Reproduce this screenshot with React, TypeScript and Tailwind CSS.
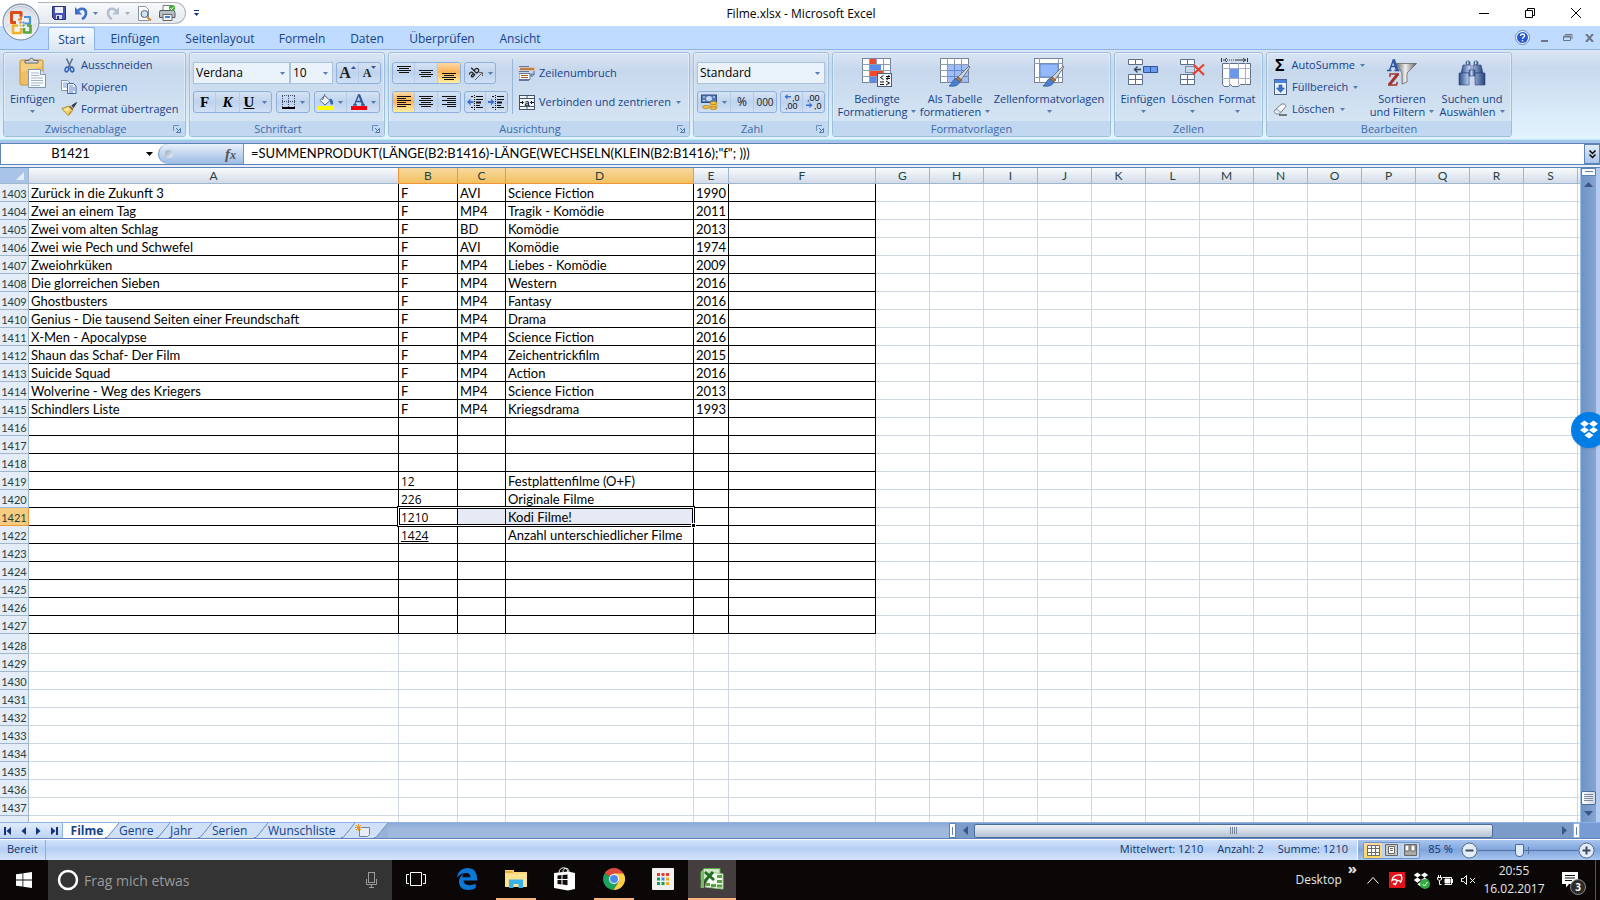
import React from "react";

type Kids = { children?: React.ReactNode };

/* ---------- spreadsheet data ---------- */

type Film = [title: string, medium: string, format: string, genre: string, year: string];

const films: Film[] = [
  ["Zurück in die Zukunft 3", "F", "AVI", "Science Fiction", "1990"],
  ["Zwei an einem Tag", "F", "MP4", "Tragik - Komödie", "2011"],
  ["Zwei vom alten Schlag", "F", "BD", "Komödie", "2013"],
  ["Zwei wie Pech und Schwefel", "F", "AVI", "Komödie", "1974"],
  ["Zweiohrküken", "F", "MP4", "Liebes - Komödie", "2009"],
  ["Die glorreichen Sieben", "F", "MP4", "Western", "2016"],
  ["Ghostbusters", "F", "MP4", "Fantasy", "2016"],
  ["Genius - Die tausend Seiten einer Freundschaft", "F", "MP4", "Drama", "2016"],
  ["X-Men - Apocalypse", "F", "MP4", "Science Fiction", "2016"],
  ["Shaun das Schaf- Der Film", "F", "MP4", "Zeichentrickfilm", "2015"],
  ["Suicide Squad", "F", "MP4", "Action", "2016"],
  ["Wolverine - Weg des Kriegers", "F", "MP4", "Science Fiction", "2013"],
  ["Schindlers Liste", "F", "MP4", "Kriegsdrama", "1993"],
];

const totals: Record<number, [string, string]> = {
  1419: ["12", "Festplattenfilme (O+F)"],
  1420: ["226", "Originale Filme"],
  1421: ["1210", "Kodi Filme!"],
  1422: ["1424", "Anzahl unterschiedlicher Filme"],
};

const FIRST_ROW = 1403;
const LAST_FRAMED_ROW = 1427;
const LAST_NUMBERED_ROW = 1437;
const SELECTED_ROW = 1421;
const rowNumbers = Array.from({ length: 36 }, (_, i) => FIRST_ROW + i);
const columns = "ABCDEFGHIJKLMNOPQRS".split("");
const columnWidths = [
  "w-[370px]", "w-[59px]", "w-[48px]", "w-[188px]", "w-[35px]", "w-[147px]",
];

function cellText(row: number, col: number): string {
  const film = films[row - FIRST_ROW];
  if (film) return film[col] ?? "";
  const total = totals[row];
  if (total && col === 1) return total[0];
  if (total && col === 3) return total[1];
  return "";
}

/* ---------- small shared parts ---------- */

function Caret({ className = "text-[#567db1]" }: { className?: string }) {
  return (
    <svg width="5" height="3" viewBox="0 0 5 3" className={`shrink-0 ${className}`} aria-hidden>
      <path d="M0 0h5L2.500 3z" fill="currentColor" />
    </svg>
  );
}

function Group({ title, width, launcher, children }: Kids & { title: string; width: string; launcher?: boolean }) {
  return (
    <section
      className={`flex shrink-0 flex-col overflow-hidden rounded-[3px] border border-[#9ebfdb] bg-linear-to-b from-[#dae5f3] from-0% via-[#c7d8ed] via-20% to-[#d8e8f5] ${width}`}
    >
      <div className="flex flex-1 border border-b-0 border-white/40">{children}</div>
      <div className="flex h-[15px] items-center bg-[#c1d8f0] px-1 text-[11px] leading-[15px] text-[#3e6aaa]">
        <span className="flex-1 text-center">{title}</span>
        {launcher && (
          <button aria-label={`${title} Optionen`} className="ml-[10px]">
            <svg width="8" height="8" viewBox="0 0 8 8" fill="none" stroke="#6a8fc0">
              <path d="M.5 6V.5H6" />
              <path d="M3.500 7.500h4v-4zM3 3l3 3" stroke="#4f78b0" />
            </svg>
          </button>
        )}
      </div>
    </section>
  );
}

function Strip({ children }: Kids) {
  return (
    <div className="flex h-[22px] shrink-0 divide-x divide-[#b5cbe8] overflow-hidden rounded-[3px] border border-[#8fb0dc] bg-linear-to-b from-[#d5e2f3] from-0% via-[#bfd3ee] via-50% to-[#d0e0f5]">
      {children}
    </div>
  );
}

function Tool({ label, width, on, children }: Kids & { label: string; width: string; on?: boolean }) {
  return (
    <button
      aria-label={label}
      className={`flex items-center justify-center gap-1 ${width} ${
        on ? "bg-linear-to-b from-[#fbd9a5] from-0% via-[#fdb355] via-45% to-[#fff0a0]" : ""
      }`}
    >
      {children}
    </button>
  );
}

function SmallButton({ icon, label, caret }: { icon: React.ReactNode; label: string; caret?: boolean }) {
  return (
    <button className="flex h-[22px] items-center whitespace-nowrap text-[#15428b]">
      <span className="mr-1 flex w-4 justify-center">{icon}</span>
      {label}
      {caret && <span className="ml-[5px]"><Caret /></span>}
    </button>
  );
}

function BigButton({
  icon, lines, width, inline,
}: { icon: React.ReactNode; lines: string[]; width: string; inline?: boolean }) {
  return (
    <button className={`flex shrink-0 flex-col items-center whitespace-nowrap pt-1 leading-[13px] text-[#15428b] ${width}`}>
      <span className="mb-1 flex h-[30px] items-center">{icon}</span>
      <span>{lines[0]}</span>
      {inline ? (
        <span className="flex items-center gap-1">{lines[1]}<Caret /></span>
      ) : (
        <span className="flex h-[13px] items-center"><Caret /></span>
      )}
    </button>
  );
}

/* ---------- icons ---------- */

function AlignIcon({ rows, shift = 0 }: { rows: [number, number][]; shift?: number }) {
  return (
    <svg width="14" height="14" viewBox="0 0 14 14" fill="#111" aria-hidden>
      {rows.map(([x, w], i) => (
        <rect key={i} x={x} y={shift + i * 2} width={w} height="1" />
      ))}
    </svg>
  );
}

const shortRows: [number, number][] = [[0, 14], [2, 10], [0, 14], [2, 10]];
const leftRows: [number, number][] = [[0, 14], [0, 9], [0, 14], [0, 9], [0, 14], [0, 9]];
const midRows: [number, number][] = [[0, 14], [2, 10], [0, 14], [2, 10], [0, 14], [2, 10]];
const rightRows: [number, number][] = [[0, 14], [5, 9], [0, 14], [5, 9], [0, 14], [5, 9]];

const IndentIcon = ({ inward }: { inward?: boolean }) => (
  <svg width="17" height="15" viewBox="0 0 17 15" className="shrink-0" aria-hidden>
    <path d="M7.500 0v15" stroke="#111" strokeDasharray="1 1" />
    <path d="M4 1.500h2M9 1.500h7M9 4.500h7M9 10.500h4M4 12.500h2M9 12.500h7" stroke="#111" />
    <path d="M9 7.500h5" stroke="#111" strokeWidth="2" />
    <path d={inward ? "M0 6h3V3.500L6.500 7 3 10.500V8H0z" : "M6.500 6h-3V3.500L0 7l3.500 3.500V8h3z"} fill="#3c6fd0" />
  </svg>
);

const PasteIcon = () => (
  <svg width="28" height="32" viewBox="0 0 28 32" aria-hidden>
    <rect x="1" y="3" width="23" height="25" rx="1.500" fill="#efbf62" stroke="#c8923a" />
    <path d="M2 4h21v5L2 15z" fill="#f8d58e" opacity=".7" />
    <path d="M6 6V3.500h4C10 .5 15 .5 15 3.500h4V6z" fill="#dfe3e8" stroke="#5d6570" />
    <rect x="11" y="2" width="3" height="2" fill="#fff" stroke="#777" strokeWidth=".5" />
    <path d="M9.500 12.500h12l5 5v13h-17z" fill="#fbfcfe" stroke="#8095b0" />
    <path d="M21.500 12.500v5h5" fill="#dbe4f0" stroke="#8095b0" />
    <path d="M12 16h8M12 18.500h8M12 21h12M12 23.500h12M12 26h12M12 28.500h9" stroke="#a4b4cb" />
  </svg>
);

const CutIcon = () => (
  <svg width="11" height="15" viewBox="0 0 11 15" fill="none" aria-hidden>
    <path d="M2.500.5 6.500 9M8.500.5 4.500 9" stroke="#5c6b80" strokeWidth="1.500" />
    <ellipse cx="2.800" cy="11.500" rx="1.700" ry="2.400" stroke="#2f5fb4" strokeWidth="1.500" transform="rotate(20 2.800 11.500)" />
    <ellipse cx="8" cy="11.500" rx="1.700" ry="2.400" stroke="#2f5fb4" strokeWidth="1.500" transform="rotate(-20 8 11.500)" />
  </svg>
);

const CopyIcon = () => (
  <svg width="16" height="14" viewBox="0 0 16 14" aria-hidden>
    <path d="M.5.5h6l2.500 2.500v7.500H.5z" fill="#fff" stroke="#7d93b8" />
    <path d="M2 3h4M2 5h5M2 7h5" stroke="#7b9cd8" />
    <path d="M6.500 3.500h6l2.500 2.500v7.500H6.500z" fill="#f3f7ff" stroke="#3c66ad" />
    <path d="M8 6h4M8 8h6M8 10h6M8 12h4" stroke="#6289cf" />
  </svg>
);

const PainterIcon = () => (
  <svg width="16" height="14" viewBox="0 0 16 14" aria-hidden>
    <path d="M15.500.5 11 3.500l1.500 2z" fill="#45474d" stroke="#33353a" />
    <path d="M9 3.500 12.500 7l-1.200 1L8 4.500z" fill="#7a5b34" />
    <path d="M1 6.500 7.500 4l4 4.500-4 5C5 11.500 3 9.500 1 6.500z" fill="#f3cf66" stroke="#a67a28" strokeWidth=".8" />
    <path d="M3 7.500 7 6l2 1-3 2z" fill="#fdf0bb" />
    <path d="m7.500 13.500 1-3 3-2z" fill="#b97a22" />
  </svg>
);

const BorderIcon = () => (
  <svg width="13" height="14" viewBox="0 0 13 14" stroke="#3f5068" fill="none" aria-hidden>
    <path d="M0 .5h13M0 6.500h13M.5 1v12M6.500 1v12M12.500 1v12" strokeDasharray="1 1" />
    <path d="M0 13h13" stroke="#000" strokeWidth="2" />
  </svg>
);

const FillIcon = () => (
  <svg width="16" height="16" viewBox="0 0 16 16" aria-hidden>
    <path d="M6.500 1.500 12 6.500 7 11 2 6.500z" fill="#eef3fa" stroke="#516b93" />
    <path d="M4.500 6 7 0" stroke="#516b93" fill="none" />
    <path d="M12 5c2 0 3 2 2.500 5-1 1-1.800 0-1.800-1.500z" fill="#3768b8" stroke="#3768b8" />
    <rect y="12" width="16" height="4" fill="#ff0" />
  </svg>
);

const FontColorIcon = () => (
  <svg width="16" height="16" viewBox="0 0 16 16" aria-hidden>
    <path d="m3.500 11 4-10h1l4 10M5 7.500h6M2 11h4M10 11h4" stroke="#34579b" strokeWidth="1.400" fill="none" />
    <path d="m8 1 4 10" stroke="#34579b" strokeWidth="2" />
    <rect y="12" width="16" height="4" fill="#f00010" />
  </svg>
);

const OrientIcon = () => (
  <svg width="16" height="16" viewBox="0 0 16 16" fill="none" stroke="#222" strokeWidth="1.300" aria-hidden>
    <g transform="rotate(-45 6 7)">
      <path d="M1 5.500c2-1.500 3.500-.5 3.500 1V10M4.500 7.500c-5-.5-4.500 3.500 0 1.500" />
      <path d="M7 2v8M7 7c1-2 4-1.500 4 .8S8 10.500 7 9" />
    </g>
    <path d="m7 15 7-7M14.500 11V7.500H11" stroke="#666" strokeWidth="1" />
  </svg>
);

const WrapIcon = () => (
  <svg width="16" height="15" viewBox="0 0 16 15" aria-hidden>
    <path d="M0 .5h10M0 5.500h10M0 14.500h10" stroke="#60779c" />
    <path d="M1 3h15" stroke="#e9b27a" strokeWidth="3" />
    <path d="M1 3h14" stroke="#8b4a1a" />
    <path d="M0 7.500h11v6H0z" fill="#fff" stroke="#60779c" />
    <path d="M2 9.500h7M2 11.500h7" stroke="#a45d22" />
    <path d="M15 5v4h-3m1.500-2-2 2 2 2" stroke="#44659b" fill="none" />
  </svg>
);

const MergeIcon = () => (
  <svg width="16" height="15" viewBox="0 0 16 15" aria-hidden>
    <rect x=".5" y=".5" width="15" height="14" fill="#f4f8fe" stroke="#42536e" />
    <path d="M0 3.500h16M0 11.500h16M8 0v3.500M8 11.500V15" stroke="#42536e" />
    <path d="M1 7.500h3M12 7.500h3M3 6l1.500 1.500L3 9M13 6l-1.500 1.500L13 9" stroke="#111" fill="none" />
    <text x="5.500" y="10.500" fontSize="9" fontWeight="700" fontFamily="Liberation Sans, sans-serif" fill="#111">a</text>
  </svg>
);

const MoneyIcon = () => (
  <svg width="17" height="16" viewBox="0 0 17 16" aria-hidden>
    <rect x=".5" y="1" width="15" height="7.500" fill="#5378b6" stroke="#2e4d86" />
    <ellipse cx="8" cy="4.500" rx="3" ry="2.500" fill="#c6d8f4" />
    <path d="M2 3h2M12 3h2M2 6.500h2" stroke="#dfe9fa" />
    <g fill="#f5c542" stroke="#a8761a" strokeWidth=".7">
      <ellipse cx="12.500" cy="14" rx="3.500" ry="1.500" />
      <ellipse cx="12.500" cy="11.500" rx="3.500" ry="1.500" />
      <ellipse cx="12.500" cy="9" rx="3.500" ry="1.500" />
      <ellipse cx="5" cy="13" rx="3.500" ry="1.500" />
    </g>
  </svg>
);

const DecimalIcon = ({ more }: { more?: boolean }) => (
  <svg width="16" height="16" viewBox="0 0 16 16" fontFamily="Liberation Sans, sans-serif" fontSize="9" fill="#111" stroke="none" className="shrink-0" aria-hidden>
    <text x={more ? 8 : 1} y="7">{more ? ",0" : ",00"}</text>
    <text x={more ? 1 : 8} y="15">{more ? ",00" : ",0"}</text>
    {more ? (
      <path d="M3.500 0v2H7v1.500H3.500v2L.5 2.800z" fill="#3c6fd0" />
    ) : (
      <path d="M3.500 8.500v2H0V12h3.500v2l3-2.700z" fill="#3c6fd0" />
    )}
  </svg>
);

const Brush = () => (
  <g>
    <path d="M29 8 18 19l3 3L30 9z" fill="#cfd3d8" stroke="#5f6670" strokeWidth=".8" />
    <path d="m18 19-2 2 3 3.500 3-2.500z" fill="#b37a3c" stroke="#75491c" strokeWidth=".7" />
    <path d="M16 20.500c-4 1-3 5-7 7.500 5 1 10-.5 10.500-4z" fill="#4d80cc" stroke="#2d5798" strokeWidth=".7" />
  </g>
);

const SheetGrid = () => (
  <g>
    <rect x=".5" y=".5" width="28" height="24" fill="#fff" stroke="#74839b" />
    <path d="M0 6.500h29M0 12.500h29M0 18.500h29M7.500 0v25M14.500 0v25M21.500 0v25" stroke="#8e9cb2" />
  </g>
);

const CondIcon = () => (
  <svg width="31" height="30" viewBox="0 0 31 30" aria-hidden>
    <SheetGrid />
    <path d="M8 1h6v5H8zM8 13h13v5H8z" fill="#f4492c" />
    <path d="M8 7h11v5H8zM8 19h6v5H8z" fill="#5a8cec" />
    <rect x="15.500" y="15.500" width="14" height="13" fill="#f3f6fb" stroke="#4b5e7d" />
    <path d="m21.500 17.500-3 2 3 2M18 24h4M18 26.500h4M24 18.500h4M24 20.500h4M27 17l-2 5M24 23l3.500 2-3.500 2" stroke="#111" fill="none" />
  </svg>
);

const TableIcon = () => (
  <svg width="31" height="30" viewBox="0 0 31 30" aria-hidden>
    <SheetGrid />
    <path d="M8 7h20v17H8z" fill="#8fb2f6" opacity=".85" />
    <path d="M8 12.500h20M8 18.500h20M14.500 7v17M21.500 7v17" stroke="#6689cc" />
    <Brush />
  </svg>
);

const StylesIcon = () => (
  <svg width="31" height="30" viewBox="0 0 31 30" aria-hidden>
    <rect x=".5" y=".5" width="28" height="24" fill="#fff" stroke="#74839b" />
    <path d="M0 5.500h29M0 19.500h29M5.500 0v25M24.500 0v25" stroke="#8e9cb2" />
    <rect x="6" y="6" width="18" height="13" fill="#94b8fa" stroke="#5f86cf" />
    <Brush />
  </svg>
);

const CellPair = ({ y }: { y: number }) => (
  <g fill="#fff" stroke="#5c6e8c">
    <path d={`M.5 ${y + 0.5}h14v5H.5zM7.500 ${y}v6`} />
  </g>
);

const InsertCellsIcon = () => (
  <svg width="30" height="28" viewBox="0 0 30 28" aria-hidden>
    <CellPair y={0} /><CellPair y={15} /><CellPair y={20} />
    <path d="M13 10.500H6.500m3-3-3 3 3 3" stroke="#33465f" strokeWidth="1.300" fill="none" />
    <path d="M15.500 7.500h14v6h-14zM22.500 7v7" fill="#6a9bf2" stroke="#2f5499" />
  </svg>
);

const DeleteCellsIcon = () => (
  <svg width="26" height="28" viewBox="0 0 26 28" aria-hidden>
    <CellPair y={0} /><CellPair y={15} /><CellPair y={20} />
    <path d="M5.500 7.500h9v6h-9z" fill="none" stroke="#33465f" strokeDasharray="1 1" />
    <path d="m14 6 10 10M24 5.500 13 15.500" stroke="#ef3b24" strokeWidth="2" />
  </svg>
);

const FormatCellsIcon = () => (
  <svg width="32" height="31" viewBox="0 0 32 31" aria-hidden>
    <path d="M.5 0v4M26.500 0v4" stroke="#333" />
    <path d="M2 2h11" stroke="#333" strokeDasharray="1 1" />
    <path d="M14 2h11M6 0 3.500 2 6 4M22 0l2.500 2L22 4" stroke="#333" fill="none" />
    <path d="M1.500 5.500h28v21h-10l-2 2h-6l-2-2-2 2h-4l-2-2z" fill="#fff" stroke="#5f6f88" />
    <path d="M1 10.500h29M1 20.500h29M8.500 5v22M17.500 5v22M24.500 5v22" stroke="#a3adbd" />
    <rect x="9" y="11" width="9" height="9" fill="#6b96ea" />
  </svg>
);

const FillDownIcon = () => (
  <svg width="13" height="16" viewBox="0 0 13 16" aria-hidden>
    <rect x=".5" y=".5" width="12" height="15" fill="#e8f0fb" stroke="#46658f" />
    <path d="M1 1h11v3H1z" fill="#4a83dd" />
    <path d="M5 6h3v3h2.500l-4 4.500L2.500 9H5z" fill="#3b6fd4" stroke="#2350a0" strokeWidth=".6" />
  </svg>
);

const EraserIcon = () => (
  <svg width="15" height="13" viewBox="0 0 15 13" aria-hidden>
    <path d="M8 1.500c1-1 4-.5 4.500.5s0 2-.5 2.500l-5 6c-1 1-4 .5-5-.5-1-1-1-2 0-3z" fill="#fafbfd" stroke="#6f7c90" />
    <path d="m1.500 7 3-.5 3 2L7 10.500" fill="#ccd5e2" stroke="#8793a5" strokeWidth=".6" />
    <path d="M6 12h8" stroke="#111" />
  </svg>
);

const SortIcon = () => (
  <svg width="30" height="30" viewBox="0 0 30 30" fill="none" aria-hidden>
    <defs>
      <linearGradient id="funnel"><stop stopColor="#6e6e6e" /><stop offset=".45" stopColor="#eee" /><stop offset="1" stopColor="#5d5d5d" /></linearGradient>
    </defs>
    <path d="M2.500 12.500 6.500 1.500M3.500 8.500h5M0 12.500h4.500M7.500 12.500h5" stroke="#2f57a6" strokeWidth="1.400" />
    <path d="m6.500 1.500 4 11" stroke="#2f57a6" strokeWidth="2.800" />
    <path d="M9.500 5.500h20L20 15v9l-5 2V15z" fill="url(#funnel)" stroke="#5a5a5a" strokeWidth=".7" />
    <path d="M3 19v-3h9M1 27h8.500l.8-3" stroke="#a5322c" strokeWidth="1.500" />
    <path d="M11 16 2 27" stroke="#a5322c" strokeWidth="2.800" />
  </svg>
);

const BinocularsIcon = () => (
  <svg width="28" height="26" viewBox="0 0 28 26" aria-hidden>
    <defs>
      <linearGradient id="barrel"><stop stopColor="#2b4a86" /><stop offset=".4" stopColor="#c3d6f5" /><stop offset="1" stopColor="#24427a" /></linearGradient>
    </defs>
    <g fill="url(#barrel)" stroke="#2c4478" strokeWidth=".6">
      <rect x="8" y="1" width="4" height="4" rx="1.500" />
      <rect x="16" y="1" width="4" height="4" rx="1.500" />
      <path d="M5 5h8v8H3zM15 5h8l2 8H15z" />
      <path d="M1 13h10v12H1zM17 13h10v12H17z" />
      <rect x="11" y="10" width="6" height="6" />
    </g>
  </svg>
);

const OfficeLogo = () => (
  <svg width="38" height="38" viewBox="0 0 38 38" aria-hidden>
    <defs>
      <radialGradient id="orb" cx=".5" cy=".85" r=".85"><stop stopColor="#fff" /><stop offset=".5" stopColor="#dfe4ec" /><stop offset="1" stopColor="#b4bfcf" /></radialGradient>
    </defs>
    <circle cx="19" cy="19" r="18" fill="url(#orb)" stroke="#7484a0" />
    <circle cx="19" cy="19" r="16.500" fill="none" stroke="#fff" opacity=".7" />
    <path d="M3 20a16 16 0 0 1 32 0c-9 3-23 3-32 0z" fill="#fff" opacity=".4" />
    <g fill="none" strokeLinejoin="round">
      <path d="M14 19.500H9.500v-10H19V14" stroke="#dc4a16" strokeWidth="3" />
      <path d="M19 13v3.500h-3" stroke="#ee7a2c" strokeWidth="2" />
      <path d="M22 14h6v6.500h-5.500" stroke="#4a93d8" strokeWidth="2.200" />
      <path d="M16 22.500h-5V30h8v-5" stroke="#f5b226" strokeWidth="2.600" />
      <path d="M22 25v4.500h6.500V22.500H25" stroke="#58a63c" strokeWidth="2.600" />
    </g>
    <path d="M17.500 18.500h2v2h-2z" fill="#e25a1c" />
    <path d="M20.500 18.500h2v2h-2z" fill="#4a93d8" />
    <path d="M17.500 21.500h2v2h-2z" fill="#f5b226" />
    <path d="M20.500 21.500h2v2h-2z" fill="#58a63c" />
  </svg>
);

/* ---------- title bar and tabs ---------- */

function TitleBar() {
  return (
    <header className="relative flex h-[26px] shrink-0 items-center bg-white">
      <div className="absolute left-[2px] top-[3px] z-10"><button aria-label="Office-Schaltfläche"><OfficeLogo /></button></div>
      <div className="ml-[38px] flex h-[22px] w-[148px] items-center rounded-r-full border border-l-0 border-[#b1b5ba] bg-linear-to-b from-[#f7f9fb] to-[#e4e9f0] pl-[14px]">
        <button aria-label="Speichern" className="w-[22px]">
          <svg width="14" height="14" viewBox="0 0 14 14"><path d="M.5.5h13v13h-11l-2-2z" fill="#4b53b5" stroke="#282d7c" /><path d="M3 1h8v6H3z" fill="#eef1fb" /><path d="M4 9h6v4H4z" fill="#d8dcef" /><path d="M5 10h2v3H5z" fill="#282d7c" /></svg>
        </button>
        <button aria-label="Rückgängig" className="flex w-[32px] items-center gap-[5px]">
          <svg width="14" height="13" viewBox="0 0 14 13"><path d="M3 5c3-5 9-4 9 1 0 3-2 5-4 6" fill="none" stroke="#3c70c8" strokeWidth="2.600" /><path d="M1 0v7.500h7z" fill="#3c70c8" /></svg>
          <Caret />
        </button>
        <button aria-label="Wiederholen" className="flex w-[31px] items-center gap-[5px]">
          <svg width="14" height="13" viewBox="0 0 14 13"><path d="M11 5C8 0 2 1 2 6c0 3 2 5 4 6" fill="none" stroke="#b4bfcf" strokeWidth="2.600" /><path d="M13 0v7.500H6z" fill="#b4bfcf" /></svg>
          <Caret className="text-[#a8afb8]" />
        </button>
        <button aria-label="Seitenansicht" className="w-[22px]">
          <svg width="15" height="15" viewBox="0 0 15 15"><path d="M1.500.5h7l3 3v11h-10z" fill="#fff" stroke="#8a93a0" /><circle cx="7.500" cy="8" r="3.500" fill="#cfe2f8" stroke="#4e6280" /><path d="m10 11 4 3.500" stroke="#d28b2d" strokeWidth="2" /></svg>
        </button>
        <button aria-label="Drucken">
          <svg width="17" height="16" viewBox="0 0 17 16"><path d="M4 .5h8V6H4z" fill="#fff" stroke="#777" /><path d="M1 5.500h14l1 2v5H.5v-5z" fill="#b9bec5" stroke="#555b63" /><path d="M4 9.500h9v6H4z" fill="#f5f7fa" stroke="#666" /><path d="M6 12h5" stroke="#4b7fd0" strokeWidth="2" /><circle cx="13" cy="3" r="3" fill="#3aa835" /><path d="m11.500 3 1 1.500 2-2.500" stroke="#fff" fill="none" /></svg>
        </button>
      </div>
      <button aria-label="Symbolleiste anpassen" className="ml-2 text-[#15327b]">
        <svg width="5" height="6" viewBox="0 0 5 6"><path d="M0 .5h5" stroke="currentColor" /><path d="M0 3h5L2.500 6z" fill="currentColor" /></svg>
      </button>
      <h1 className="flex-1 pr-[58px] pt-[2px] text-center text-[12px] text-black">Filme.xlsx - Microsoft Excel</h1>
      <div className="flex h-full pr-px">
        <button aria-label="Minimieren" className="flex w-[46px] items-center justify-center"><svg width="10" height="10"><path d="M0 5.500h10" stroke="#000" /></svg></button>
        <button aria-label="Verkleinern" className="flex w-[46px] items-center justify-center"><svg width="10" height="10" fill="none" stroke="#000"><path d="M.5 2.500h7v7h-7zM2.500 2V.5h7v7H8" /></svg></button>
        <button aria-label="Schließen" className="flex w-[46px] items-center justify-center"><svg width="10" height="10" stroke="#000"><path d="m0 0 10 10M10 0 0 10" /></svg></button>
      </div>
    </header>
  );
}

const ribbonTabs: [string, string][] = [
  ["Einfügen", "w-[76px]"], ["Seitenlayout", "w-[94px]"], ["Formeln", "w-[70px]"],
  ["Daten", "w-[60px]"], ["Überprüfen", "w-[90px]"], ["Ansicht", "w-[66px]"],
];

function RibbonTabs() {
  return (
    <nav className="flex h-6 shrink-0 items-end border-b border-[#8db2e3] bg-[#bfdbff] pl-12 text-[12px] text-[#15428b]">
      <button className="-mb-px h-[23px] w-[47px] rounded-t-[3px] border border-b-0 border-[#8db2e3] bg-linear-to-b from-[#f6faff] to-[#dbe6f4] pt-px">Start</button>
      <span className="w-[2px]" />
      {ribbonTabs.map(([name, width]) => (
        <button key={name} className={`h-[23px] pt-[2px] ${width}`}>{name}</button>
      ))}
      <span className="flex-1" />
      <div className="flex h-[23px] items-center pr-[3px]">
        <button aria-label="Hilfe" className="mr-[11px]">
          <svg width="15" height="15" viewBox="0 0 15 15"><circle cx="7.500" cy="7.500" r="7" fill="#fff" stroke="#5f83bd" /><circle cx="7.500" cy="7.500" r="5.500" fill="#2559cf" /><path d="M5.500 6c0-3 4.500-2.500 4 0-.3 1-2 1.200-2 3M7.500 10v1.500" stroke="#fff" strokeWidth="1.400" fill="none" /></svg>
        </button>
        <button aria-label="Mappe minimieren" className="w-[22px]"><svg width="8" height="10"><path d="M0 8h7" stroke="#6c7685" strokeWidth="2" /></svg></button>
        <button aria-label="Mappe verkleinern" className="w-[22px]"><svg width="10" height="8" fill="none" stroke="#6c7685"><path d="M.5 2.500h7v4h-7zM2 .5h7V5" /><path d="M.5 2.500h7" strokeWidth="2" /></svg></button>
        <button aria-label="Mappe schließen" className="w-3"><svg width="10" height="8"><path d="m1 0 7 8M8 0 1 8" stroke="#6c7685" strokeWidth="2" /></svg></button>
      </div>
    </nav>
  );
}

/* ---------- ribbon ---------- */

function Picker({ label, value, width }: { label: string; value: string; width: string }) {
  return (
    <div className={`relative flex h-[22px] items-center ${width}`}>
      <select aria-label={label} defaultValue={value} className="h-full w-full appearance-none border border-[#abc1de] bg-[#eaf2fb] pl-[2px] text-[12px] text-black">
        <option>{value}</option>
      </select>
      <span className="pointer-events-none absolute right-[5px]"><Caret /></span>
    </div>
  );
}

function Ribbon() {
  return (
    <div className="flex h-[90px] shrink-0 gap-[3px] border-b border-[#b5eef5] bg-linear-to-b from-[#dbe6f4] from-0% via-[#c8d9ee] via-20% to-[#e3f4ff] pb-[2px] pl-[3px] pt-[2px] text-[11px]">
      <Group title="Zwischenablage" width="w-[183px]" launcher>
        <BigButton icon={<PasteIcon />} lines={["Einfügen"]} width="w-[55px]" />
        <div className="flex flex-col pl-px">
          <SmallButton icon={<CutIcon />} label="Ausschneiden" />
          <SmallButton icon={<CopyIcon />} label="Kopieren" />
          <SmallButton icon={<PainterIcon />} label="Format übertragen" />
        </div>
      </Group>

      <Group title="Schriftart" width="w-[196px]" launcher>
        <div className="flex flex-col gap-[7px] pl-[2px] pt-2">
          <div className="flex">
            <Picker label="Schriftart" value="Verdana" width="w-[97px]" />
            <Picker label="Schriftgrad" value="10" width="w-[43px]" />
            <span className="w-[3px]" />
            <Strip>
              <Tool label="Schriftgrad vergrößern" width="w-[22px]">
                <span className="font-['Liberation_Serif',serif] text-[16px] font-bold leading-4 text-[#222]">A</span>
                <svg width="5" height="14" className="-ml-1"><path d="M0 3h5L2.500 0z" fill="#34579b" /></svg>
              </Tool>
              <Tool label="Schriftgrad verkleinern" width="w-[21px]">
                <span className="font-['Liberation_Serif',serif] text-[12px] font-bold leading-4 text-[#222]">A</span>
                <svg width="5" height="14" className="-ml-1"><path d="M0 0h5L2.500 3z" fill="#34579b" /></svg>
              </Tool>
            </Strip>
          </div>
          <div className="flex gap-[4px] font-['Liberation_Serif',serif] text-[15px] font-bold text-black">
            <Strip>
              <Tool label="Fett" width="w-[22px]">F</Tool>
              <Tool label="Kursiv" width="w-[24px]"><i>K</i></Tool>
              <Tool label="Unterstrichen" width="w-[31px]"><u>U</u><span className="ml-1"><Caret /></span></Tool>
            </Strip>
            <Strip><Tool label="Rahmen" width="w-[32px]"><BorderIcon /><span className="ml-px"><Caret /></span></Tool></Strip>
            <Strip>
              <Tool label="Füllfarbe" width="w-[32px]"><FillIcon /><Caret /></Tool>
              <Tool label="Schriftfarbe" width="w-[32px]"><FontColorIcon /><Caret /></Tool>
            </Strip>
          </div>
        </div>
      </Group>

      <Group title="Ausrichtung" width="w-[302px]" launcher>
        <div className="flex flex-col gap-[7px] pl-[2px] pt-2">
          <div className="flex gap-[3px]">
            <Strip>
              <Tool label="Oben ausrichten" width="w-[22px]"><AlignIcon rows={shortRows} /></Tool>
              <Tool label="Zentriert ausrichten" width="w-[23px]"><AlignIcon rows={shortRows} shift={4} /></Tool>
              <Tool label="Unten ausrichten" width="w-[22px]" on><AlignIcon rows={shortRows} shift={7} /></Tool>
            </Strip>
            <Strip><Tool label="Ausrichtung" width="w-[30px]"><OrientIcon /><Caret /></Tool></Strip>
          </div>
          <div className="flex gap-[3px]">
            <Strip>
              <Tool label="Linksbündig" width="w-[22px]" on><AlignIcon rows={leftRows} shift={1} /></Tool>
              <Tool label="Zentriert" width="w-[23px]"><AlignIcon rows={midRows} shift={1} /></Tool>
              <Tool label="Rechtsbündig" width="w-[22px]"><AlignIcon rows={rightRows} shift={1} /></Tool>
            </Strip>
            <Strip>
              <Tool label="Einzug verkleinern" width="w-[21px]"><IndentIcon /></Tool>
              <Tool label="Einzug vergrößern" width="w-[21px]"><IndentIcon inward /></Tool>
            </Strip>
          </div>
        </div>
        <div className="ml-1 mt-[5px] h-[55px] w-px bg-[#9ab5d8]" />
        <div className="flex flex-col gap-[7px] pl-[6px] pt-2">
          <SmallButton icon={<WrapIcon />} label="Zeilenumbruch" />
          <SmallButton icon={<MergeIcon />} label="Verbinden und zentrieren" caret />
        </div>
      </Group>

      <Group title="Zahl" width="w-[136px]" launcher>
        <div className="flex flex-col gap-[7px] pl-[2px] pt-2">
          <Picker label="Zahlenformat" value="Standard" width="w-[128px]" />
          <div className="flex gap-[3px] text-[12px] text-[#222]">
            <Strip>
              <Tool label="Buchhaltungsformat" width="w-[33px]"><MoneyIcon /><Caret /></Tool>
              <Tool label="Prozentformat" width="w-[23px]">%</Tool>
              <Tool label="Tausendertrennzeichen" width="w-[22px]"><span className="text-[10px]">000</span></Tool>
            </Strip>
            <Strip>
              <Tool label="Dezimalstelle hinzufügen" width="w-[22px]"><DecimalIcon more /></Tool>
              <Tool label="Dezimalstelle löschen" width="w-[21px]"><DecimalIcon /></Tool>
            </Strip>
          </div>
        </div>
      </Group>

      <Group title="Formatvorlagen" width="w-[279px]">
        <BigButton icon={<CondIcon />} lines={["Bedingte", "Formatierung"]} width="w-[86px]" inline />
        <BigButton icon={<TableIcon />} lines={["Als Tabelle", "formatieren"]} width="w-[70px]" inline />
        <BigButton icon={<StylesIcon />} lines={["Zellenformatvorlagen"]} width="w-[118px]" />
      </Group>

      <Group title="Zellen" width="w-[149px]">
        <BigButton icon={<InsertCellsIcon />} lines={["Einfügen"]} width="w-[54px]" />
        <BigButton icon={<DeleteCellsIcon />} lines={["Löschen"]} width="w-[45px]" />
        <BigButton icon={<FormatCellsIcon />} lines={["Format"]} width="w-[44px]" />
      </Group>

      <Group title="Bearbeiten" width="w-[246px]">
        <div className="flex w-[97px] flex-col pl-1">
          <SmallButton icon={<span className="text-[16px] font-bold leading-4 text-black">Σ</span>} label="AutoSumme" caret />
          <SmallButton icon={<FillDownIcon />} label="Füllbereich" caret />
          <SmallButton icon={<EraserIcon />} label="Löschen" caret />
        </div>
        <BigButton icon={<SortIcon />} lines={["Sortieren", "und Filtern"]} width="w-[74px]" inline />
        <BigButton icon={<BinocularsIcon />} lines={["Suchen und", "Auswählen"]} width="w-[66px]" inline />
      </Group>
    </div>
  );
}

/* ---------- formula bar ---------- */

function FormulaBar() {
  return (
    <div className="flex h-[28px] shrink-0 flex-col">
      <div className="h-[4px] border-b border-[#5d83b8] bg-[#a9c4e9]" />
      <div className="flex h-[20px] bg-white">
        <div className="flex w-[158px] items-center border-l border-[#5d83b8]">
          <input aria-label="Namenfeld" defaultValue="B1421" className="w-[145px] shrink-0 pr-[6px] text-center font-['Lato',sans-serif] text-[13px] text-black outline-none" />
          <svg width="7" height="4" aria-hidden><path d="M0 0h7L3.500 4z" /></svg>
        </div>
        <div className="flex w-[86px] items-center justify-between rounded-l-full border-x border-[#6f94c6] bg-linear-to-b from-[#e9f1fb] to-[#9bbae3] pl-[6px] pr-[7px]">
          <span className="h-2 w-2 rounded-full bg-linear-to-br from-[#9aa9bd] to-[#f0f4f9]" />
          <span className="font-['Liberation_Serif',serif] text-[15px] font-bold italic leading-4 text-[#555]">f<span className="text-[12px]">x</span></span>
        </div>
        <input
          aria-label="Bearbeitungsleiste"
          defaultValue={'=SUMMENPRODUKT(LÄNGE(B2:B1416)-LÄNGE(WECHSELN(KLEIN(B2:B1416);"f"; )))'}
          className="min-w-0 flex-1 pl-[7px] font-['Lato',sans-serif] text-[13px] text-black outline-none"
        />
        <button aria-label="Bearbeitungsleiste erweitern" className="flex w-4 items-center justify-center border border-[#5d83b8] bg-linear-to-b from-[#e3edfa] to-[#a9c4ea]">
          <svg width="7" height="9" viewBox="0 0 7 9" fill="none" stroke="#000" strokeWidth="1.500"><path d="m.5.500 3 3 3-3M.5 4.500l3 3 3-3" /></svg>
        </button>
      </div>
      <div className="h-[4px] border-y border-[#5d83b8] bg-[#e9f1fb]" />
    </div>
  );
}

/* ---------- sheet ---------- */

function SelectionFrame() {
  return (
    <div className="pointer-events-none absolute -left-[2px] -top-[2px] z-10 h-[21px] w-[298px] border border-black">
      <div className="h-full w-full border border-white">
        <div className="h-full w-full border border-black" />
      </div>
      <div className="absolute -bottom-[2px] -right-[2px] h-[5px] w-[5px] border border-white bg-black" />
    </div>
  );
}

function Sheet() {
  return (
    <div className="min-w-0 flex-1 overflow-hidden bg-white">
      <table className="w-full table-fixed border-separate border-spacing-0 font-['Lato',sans-serif] text-[13px] text-black">
        <colgroup>
          <col className="w-[29px]" />
          {columns.map((c, i) => <col key={c} className={columnWidths[i] ?? "w-[54px]"} />)}
          <col />
        </colgroup>
        <thead>
          <tr className="h-4 text-[#27413e]">
            <th className="h-4 border-b border-r border-[#9eb6ce] bg-[#a9c4e9] p-0">
              <svg width="8" height="8" className="ml-auto mr-1"><path d="M8 0v8H0z" fill="#e4ecf7" /></svg>
            </th>
            {columns.map((c, i) => (
              <th
                key={c}
                className={`h-4 overflow-hidden border-b border-r p-0 text-[12px] font-normal leading-[15px] ${
                  i >= 1 && i <= 3
                    ? "border-[#f29536] bg-linear-to-b from-[#f9d99f] to-[#f1c15f]"
                    : i === 0
                      ? "border-b-[#9eb6ce] border-r-[#f29536] bg-linear-to-b from-[#f9fcfd] to-[#d3dbe9]"
                      : "border-[#9eb6ce] bg-linear-to-b from-[#f9fcfd] to-[#d3dbe9]"
                }`}
              >
                {c}
              </th>
            ))}
            <th className="border-b border-[#9eb6ce] bg-linear-to-b from-[#f9fcfd] to-[#d3dbe9] p-0" />
          </tr>
        </thead>
        <tbody>
          {rowNumbers.map((n) => {
            const framed = n <= LAST_FRAMED_ROW;
            const tall = n === LAST_FRAMED_ROW + 1;
            const size = tall ? "h-5 pt-1 leading-[15px]" : "h-[18px] pt-[2px] leading-[15px]";
            return (
              <tr key={n}>
                <th
                  className={`border-b border-r px-0 pb-0 text-[11px] font-normal text-[#27413e] ${size} ${
                    n === SELECTED_ROW ? "border-[#f29536] bg-[#f8cc80]" : "border-[#9eb6ce] bg-[#e4ecf7]"
                  }`}
                >
                  {n <= LAST_NUMBERED_ROW ? n : ""}
                </th>
                {columns.map((c, i) => {
                  const black = framed && i <= 5;
                  const shaded = n === SELECTED_ROW && (i === 2 || i === 3);
                  const total = i === 1 && n > 1415;
                  return (
                    <td
                      key={c}
                      className={`relative whitespace-nowrap border-b border-r pb-0 pl-[2px] pr-0 ${size} ${
                        black ? "border-black" : "border-[#d0d7e5]"
                      } ${shaded ? "bg-[#e6eaf4]" : ""} ${total ? "font-['Open_Sans',sans-serif] text-[12px]" : ""} ${
                        total && n === 1422 ? "underline" : ""
                      }`}
                    >
                      {cellText(n, i)}
                      {n === SELECTED_ROW && i === 1 && <SelectionFrame />}
                    </td>
                  );
                })}
                <td className="border-b border-[#d0d7e5] p-0" />
              </tr>
            );
          })}
        </tbody>
      </table>
    </div>
  );
}

function VerticalScroll() {
  return (
    <div className="flex w-5 shrink-0 bg-[#b3cbf0]">
      <div className="flex w-4 flex-col items-center border-l border-[#9ec4f0] bg-linear-to-r from-[#6f93c4] to-[#86a5d1]">
        <button aria-label="Teilen" className="flex h-2 w-full items-center justify-center border border-[#5d83b8] bg-white"><span className="h-[3px] w-2 border-t border-[#5d83b8]" /></button>
        <button aria-label="Nach oben" className="flex h-4 items-center"><svg width="9" height="5"><path d="M0 5 4.500 0 9 5z" fill="#3c5585" /></svg></button>
        <span className="flex-1" />
        <button aria-label="Bildlauf" className="flex h-[14px] w-full items-center justify-center rounded-[2px] border border-[#4f6d9c] bg-linear-to-r from-white to-[#cfd8e6]">
          <svg width="9" height="8"><path d="M0 .5h9M0 2.500h9M0 4.500h9M0 6.500h9" stroke="#7d8ba3" /></svg>
        </button>
        <button aria-label="Nach unten" className="flex h-[17px] items-center"><svg width="9" height="5"><path d="M0 0h9L4.500 5z" fill="#3c5585" /></svg></button>
      </div>
    </div>
  );
}

/* ---------- sheet tabs and horizontal scroll ---------- */

function Slant({ left, right }: { left: string; right: string }) {
  return (
    <svg width="14" height="15" viewBox="0 0 14 15" className="shrink-0" aria-hidden>
      <path d="M0 0h14L2 15H0z" fill={left} />
      <path d="M14 0v15H2z" fill={right} />
      <path d="M14 0 2 14.500" stroke="#6a8ec4" fill="none" />
      <path d="M0 14.500h2" stroke="#6a8ec4" />
    </svg>
  );
}

const sheetTabs: [string, string][] = [
  ["Genre", "w-[37px]"], ["Jahr", "w-[28px]"], ["Serien", "w-[42px]"], ["Wunschliste", "w-[73px]"],
];

const navShapes = [
  ["Erstes Blatt", "M0 0h2v8H0zM7 0v8L2.500 4z"],
  ["Vorheriges Blatt", "M6 0v8L1.500 4z"],
  ["Nächstes Blatt", "M1 0v8l4.500-4z"],
  ["Letztes Blatt", "M0 0v8l4.500-4zM5 0h2v8H5z"],
];

function SheetTabs() {
  return (
    <div className="flex h-[17px] shrink-0 border-b border-t border-b-[#5d83b8] border-t-[#8db2e3] bg-linear-to-b from-[#8cabd6] to-[#9fb8de] to-40% text-[12px] leading-[15px] text-[#15428b]">
      <div className="flex w-[63px] items-center justify-around border-r border-[#8db2e3] bg-linear-to-b from-[#e0ecfb] to-[#bcd3f4]">
        {navShapes.map(([label, d]) => (
          <button key={label} aria-label={label}><svg width="7" height="8"><path d={d} fill="#15327b" /></svg></button>
        ))}
      </div>
      <button className="w-[42px] bg-white pl-[6px] text-center font-bold">Filme</button>
      <Slant left="#fff" right="#cfe0f7" />
      {sheetTabs.map(([name, width]) => (
        <React.Fragment key={name}>
          <button className={`flex justify-start whitespace-nowrap bg-[#cfe0f7] ${width}`}>{name}</button>
          <Slant left="#cfe0f7" right="#cfe0f7" />
        </React.Fragment>
      ))}
      <button aria-label="Tabellenblatt einfügen" className="flex w-[19px] items-center justify-start bg-[#cfe0f7]">
        <svg width="15" height="13" viewBox="0 0 15 13"><path d="M4.500 3.500h10v7l-2 2h-8z" fill="#e8eef8" stroke="#6f84a8" /><path d="M3.500 0v7M0 3.500h7M1 1l5 5M6 1 1 6" stroke="#e8962c" /></svg>
      </button>
      <Slant left="#cfe0f7" right="#98b3db" />
      <span className="flex-1" />
      <span className="flex w-[7px] items-center justify-center border border-[#5d83b8] bg-white"><span className="h-2 w-px bg-[#5d83b8]" /></span>
      <div className="flex w-[617px] items-center bg-[#7b9bc8]">
        <button aria-label="Nach links" className="flex w-[18px] justify-center"><svg width="5" height="9"><path d="M5 0v9L0 4.500z" fill="#3c5585" /></svg></button>
        <button aria-label="Bildlauf horizontal" className="flex h-[14px] w-[519px] items-center justify-center rounded-[2px] border border-[#4f6d9c] bg-linear-to-b from-[#eef2f7] from-0% via-[#d3dbe6] via-50% to-[#b3c1d4]">
          <svg width="8" height="7"><path d="M.5 0v7M2.500 0v7M4.500 0v7M6.500 0v7" stroke="#77869c" /></svg>
        </button>
        <span className="flex-1" />
        <button aria-label="Nach rechts" className="flex w-[18px] justify-center"><svg width="5" height="9"><path d="M0 0v9l5-4.500z" fill="#3c5585" /></svg></button>
      </div>
      <span className="flex w-[7px] items-center justify-center border border-[#9bb3d6] bg-white"><span className="h-2 w-px bg-[#5d83b8]" /></span>
      <span className="w-5 bg-[#779bd4]" />
    </div>
  );
}

/* ---------- status bar ---------- */

function StatusBar() {
  return (
    <footer className="flex h-[21px] shrink-0 items-center border-t border-white bg-linear-to-b from-[#d3e3fa] from-0% via-[#b5cff4] via-45% to-[#d5e4fa] text-[11px] leading-[18px] text-[#15326e]">
      <span className="flex h-full w-[46px] items-start border-r border-[#8fb0dc] pl-[7px]">Bereit</span>
      <span className="flex-1" />
      <div className="flex h-full items-start gap-[14px] pr-[9px]">
        <span>Mittelwert: 1210</span>
        <span>Anzahl: 2</span>
        <span>Summe: 1210</span>
      </div>
      <div className="flex h-full w-[243px] items-center border-l border-white bg-linear-to-b from-[#a9c5ef] from-0% via-[#7fa5dc] via-50% to-[#a8c6f0] pl-[5px]">
        <div className="flex h-[17px] divide-x divide-[#b5cbe8] rounded-[2px] border border-[#6f94c6] bg-[#c0d5f2]">
          <button aria-label="Normal" className="flex w-[19px] items-center justify-center bg-linear-to-b from-[#fbd9a5] to-[#ffd65c]">
            <svg width="13" height="11"><path d="M.5.500h12v10H.5zM.5 3.500h12M.5 7.500h12M4.500 0v11M8.500 0v11" fill="#fff" stroke="#6b6b6b" /></svg>
          </button>
          <button aria-label="Seitenlayout" className="flex w-[18px] items-center justify-center">
            <svg width="13" height="12"><path d="M.5.500h12v11H.5z" fill="#ccc" stroke="#666" /><path d="M3.500 2.500h6v7h-6z" fill="#fff" stroke="#666" /><path d="M5 4.500h3M5 6.500h3" stroke="#666" /></svg>
          </button>
          <button aria-label="Umbruchvorschau" className="flex w-[18px] items-center justify-center">
            <svg width="13" height="12"><path d="M.5.500h12v11H.5z" fill="#aaa" stroke="#666" /><path d="M1 1h4v6H1zM7 1h4v6H7z" fill="#fff" stroke="#666" /></svg>
          </button>
        </div>
        <span className="w-[41px] self-start text-center">85 %</span>
        <button aria-label="Verkleinern" className="shrink-0"><svg width="17" height="17"><circle cx="8.500" cy="8.500" r="7.500" fill="#e3edfa" stroke="#54657f" /><path d="M4.500 8.500h8" stroke="#3b4a63" strokeWidth="2" /></svg></button>
        <input
          type="range"
          aria-label="Zoom"
          defaultValue="41"
          className="h-[13px] min-w-0 flex-1 appearance-none bg-[linear-gradient(#54739f,#54739f),linear-gradient(#54739f,#54739f)] bg-[length:100%_1px,1px_7px] bg-center bg-no-repeat [&::-webkit-slider-thumb]:h-[13px] [&::-webkit-slider-thumb]:w-[9px] [&::-webkit-slider-thumb]:appearance-none [&::-webkit-slider-thumb]:rounded-t-[1px] [&::-webkit-slider-thumb]:rounded-b-[4px] [&::-webkit-slider-thumb]:border [&::-webkit-slider-thumb]:border-[#4a6796] [&::-webkit-slider-thumb]:bg-[#dfeafa]"
        />
        <button aria-label="Vergrößern" className="mr-[5px] shrink-0"><svg width="17" height="17"><circle cx="8.500" cy="8.500" r="7.500" fill="#e3edfa" stroke="#54657f" /><path d="M4.500 8.500h8M8.500 4.500v8" stroke="#3b4a63" strokeWidth="2" /></svg></button>
      </div>
    </footer>
  );
}

/* ---------- Windows taskbar ---------- */

function TaskButton({ label, bar = "", active, children }: Kids & { label: string; bar?: string; active?: boolean }) {
  return (
    <button aria-label={label} className={`flex h-10 w-12 shrink-0 flex-col items-center ${active ? "bg-[#443f3e]" : ""}`}>
      <span className="flex h-[38px] items-center justify-center">{children}</span>
      <span className={`h-[2px] ${bar}`} />
    </button>
  );
}

const DropboxMark = ({ size, className = "" }: { size: number; className?: string }) => (
  <svg width={size} height={size} viewBox="0 0 20 19" className={className} fill="#fff" aria-hidden>
    <path d="M5.500 0 10 3.200 5.500 6.400 1 3.200zM14.500 0 19 3.200l-4.500 3.200L10 3.200zM5.500 6.400 10 9.600l-4.500 3.200L1 9.600zM14.500 6.400 19 9.600l-4.500 3.200L10 9.600zM10 11.500l4.500 3.200L10 18l-4.500-3.300z" />
  </svg>
);

function Taskbar() {
  return (
    <div className="flex h-10 shrink-0 items-center bg-[#0b0706] text-[12px] text-[#e6e6e6]">
      <button aria-label="Start" className="flex h-10 w-12 items-center justify-center">
        <svg width="16" height="16" fill="#fff"><path d="M0 2.300 6.500 1.400v6.200H0zM7.300 1.200 16 0v7.600H7.300zM0 8.400h6.500v6.200L0 13.700zM7.300 8.400H16V16l-8.700-1.200z" /></svg>
      </button>
      <div className="flex h-10 w-[344px] items-center bg-[#333] pl-[9px] pr-[15px]">
        <svg width="22" height="22"><circle cx="11" cy="11" r="9" fill="none" stroke="#fff" strokeWidth="2.500" /></svg>
        <input aria-label="Suche" placeholder="Frag mich etwas" className="ml-[5px] min-w-0 flex-1 bg-transparent text-[14px] outline-none placeholder:text-[#9a9a9a]" />
        <svg width="11" height="16" fill="none" stroke="#9a9a9a"><rect x="2.500" y=".5" width="6" height="10" /><path d="M.5 7v5.500h10V7M5.500 13v2.500M3 15.500h5" /></svg>
      </div>
      <TaskButton label="Taskansicht"><svg width="20" height="14" fill="none" stroke="#fff"><path d="M4.500.5h11v13h-11zM3 2.500H.5v9H3M17 2.500h2.500v9H17" /></svg></TaskButton>
      <div className="ml-[3px] flex gap-px">
        <TaskButton label="Edge">
          <svg width="20" height="22" viewBox="0 0 20 22"><path d="M0 9.500C.8 3.500 5 0 10.500 0 16.500 0 20 4 20 10v2.500H6.500c.2 3 2.800 4.700 6.200 4.700 2.300 0 4.300-.6 6-1.600v4.500c-2 1.200-4.500 1.900-7.500 1.900C5.500 22 2 18.700 2 13.500c0-3.300 1.800-6 4.800-7.500-.9 1-1.400 2-1.600 3.300h8.300C13.500 6.600 12 5 9.300 5 5.500 5 2 6.800 0 9.500z" fill="#0b78d8" /></svg>
        </TaskButton>
        <TaskButton label="Explorer" bar="w-10 bg-[#fab27b]">
          <svg width="22" height="19"><path d="M0 2V0h9v2h13v15H0z" fill="#fbd978" /><path d="M0 4h22v13H0z" fill="#fde391" /><path d="M0 1h8v2H0z" fill="#e5b23a" /><path d="M4 18V9.500h14V18h-4.500v-4h-5v4z" fill="#39b1ea" /></svg>
        </TaskButton>
        <TaskButton label="Store">
          <svg width="22" height="24" viewBox="0 0 22 24"><path d="M5 6c0-7 9-7 9 0M9 5c0-5 6-5 6 0" fill="none" stroke="#fff" /><path d="m0 6 14-1.500L21 6v16l-7 1.500L0 21z" fill="#fff" /><path d="M3.500 8.500 7.500 8v4h-4zM8.500 8l5-.5V12h-5zM3.500 13h4v4.500l-4-.5zM8.500 13h5v5.200l-5-.6z" fill="#120c0a" /></svg>
        </TaskButton>
        <TaskButton label="Chrome" bar="w-10 bg-[#fab27b]">
          <svg width="22" height="22" viewBox="0 0 22 22"><path d="M11 11 1.500 5.500a11 11 0 0 1 19 0z" fill="#dd4b3e" /><path d="M11 11h0L1.500 5.500A11 11 0 0 0 10.500 22l5-8.500z" fill="#1da15f" /><path d="M20.500 5.500H11L15.500 13.500l-5 8.500a11 11 0 0 0 10-16.500z" fill="#fdce45" /><circle cx="11" cy="11" r="5" fill="#fff" /><circle cx="11" cy="11" r="4" fill="#4a89f0" /></svg>
        </TaskButton>
        <TaskButton label="App-Übersicht">
          <svg width="22" height="22"><rect width="22" height="22" rx="1" fill="#f1f1f1" /><path d="M5 5h3v3H5zM9.500 5h3v3h-3zM14 5h3v3h-3z" fill="#e43e2b" /><path d="M5 9.500h3v3H5zM5 14h3v3H5zM9.500 14h3v3h-3z" fill="#129b57" /><path d="M9.500 9.500h3v3h-3z" fill="#3f83f0" /><path d="M14 9.500h3v3h-3zM14 14h3v3h-3z" fill="#fbab13" /></svg>
        </TaskButton>
        <TaskButton label="Excel" bar="w-12 bg-[#fab27b]" active>
          <svg width="24" height="22" viewBox="0 0 24 22"><path d="M4 .5h16v12H1V4z" fill="#cfe6c4" stroke="#5da349" /><path d="M1.500 4.500 4 1v19H.5z" fill="#79b965" /><path d="m10 4 13 2v15l-18-2z" fill="#f6faf4" stroke="#9cc48e" /><path d="M17 7h5v3h-5zM17 12h5v3h-5zM17 16.500h5v3h-5zM11 16h5v3h-5zM5.500 15h4.500v3H5.500z" fill="#57a33f" /><path d="m5 4 9 8M13 4 5 13" stroke="#1e6b22" strokeWidth="2.800" /></svg>
        </TaskButton>
      </div>
      <span className="flex-1" />
      <span>Desktop</span>
      <span className="mb-6 ml-[6px] mr-[10px] text-[15px] font-bold leading-4">»</span>
      <button aria-label="Ausgeblendete Symbole" className="mr-[10px]"><svg width="12" height="7" fill="none" stroke="#fff"><path d="m.5 6.500 5.500-6 5.500 6" /></svg></button>
      <svg width="16" height="16" className="mr-2"><rect width="16" height="16" fill="#e2121c" /><path d="M3 8.500C3.500 4.500 7 2.500 12 3c1.500 3 1 5-.5 7C10.500 8.500 9.500 8 8 8.500 6.500 7 4.500 7.500 3 8.500zM8.500 8l-2 4.500-2.500-1" fill="none" stroke="#fff" strokeWidth="1.400" /></svg>
      <span className="relative mr-2">
        <DropboxMark size={16} />
        <svg width="10" height="10" className="absolute -bottom-px -right-px"><circle cx="5" cy="5" r="5" fill="#2fae3f" /><path d="m2.500 5 2 2 3-4" stroke="#fff" fill="none" /></svg>
      </span>
      <svg width="16" height="12" className="mr-2" fill="none" stroke="#fff"><path d="M5.500 3.500h9v7h-7M15.500 5v4M.5 3.500h4v2q-2 2-4 0zM1.500 1v2M3.500 1v2M2.500 7v3.500h2" /><path d="M8 5h5v4H8z" fill="#fff" /></svg>
      <svg width="15" height="12" className="mr-[10px]" fill="none" stroke="#fff"><path d="M.5 4.500h2l3-3v9l-3-3h-2zM9 4l5 5M14 4 9 9" /></svg>
      <div className="w-[56px] whitespace-nowrap text-center leading-[18px]">
        <div>20:55</div>
        <div className="-mx-1">16.02.2017</div>
      </div>
      <button aria-label="Info-Center, 3 neue Benachrichtigungen" className="relative ml-5 mr-[17px]">
        <svg width="16" height="16"><path d="M0 0h16v12H7l-3 3.500V12H0z" fill="#fff" /><path d="M3 3.500h10M3 6h10M3 8.500h7" stroke="#111" /></svg>
        <span className="absolute -bottom-[7px] -right-2 flex h-4 w-4 items-center justify-center rounded-full border border-[#888] bg-[#2b2b2b] text-[10px] font-bold leading-3 text-white">3</span>
      </button>
      <span className="mr-1 h-10 w-px bg-[#555]" />
    </div>
  );
}

export default function App() {
  return (
    <div className="relative flex h-screen flex-col overflow-hidden bg-[#bfdbff] font-['Open_Sans',sans-serif]">
      <TitleBar />
      <RibbonTabs />
      <Ribbon />
      <FormulaBar />
      <main className="flex min-h-0 flex-1">
        <Sheet />
        <VerticalScroll />
      </main>
      <SheetTabs />
      <StatusBar />
      <Taskbar />
      <button aria-label="Dropbox" className="absolute -right-[7px] top-[412px] z-20 flex h-9 w-9 items-center justify-center rounded-full bg-[#007ee5] shadow">
        <DropboxMark size={20} />
      </button>
    </div>
  );
}
